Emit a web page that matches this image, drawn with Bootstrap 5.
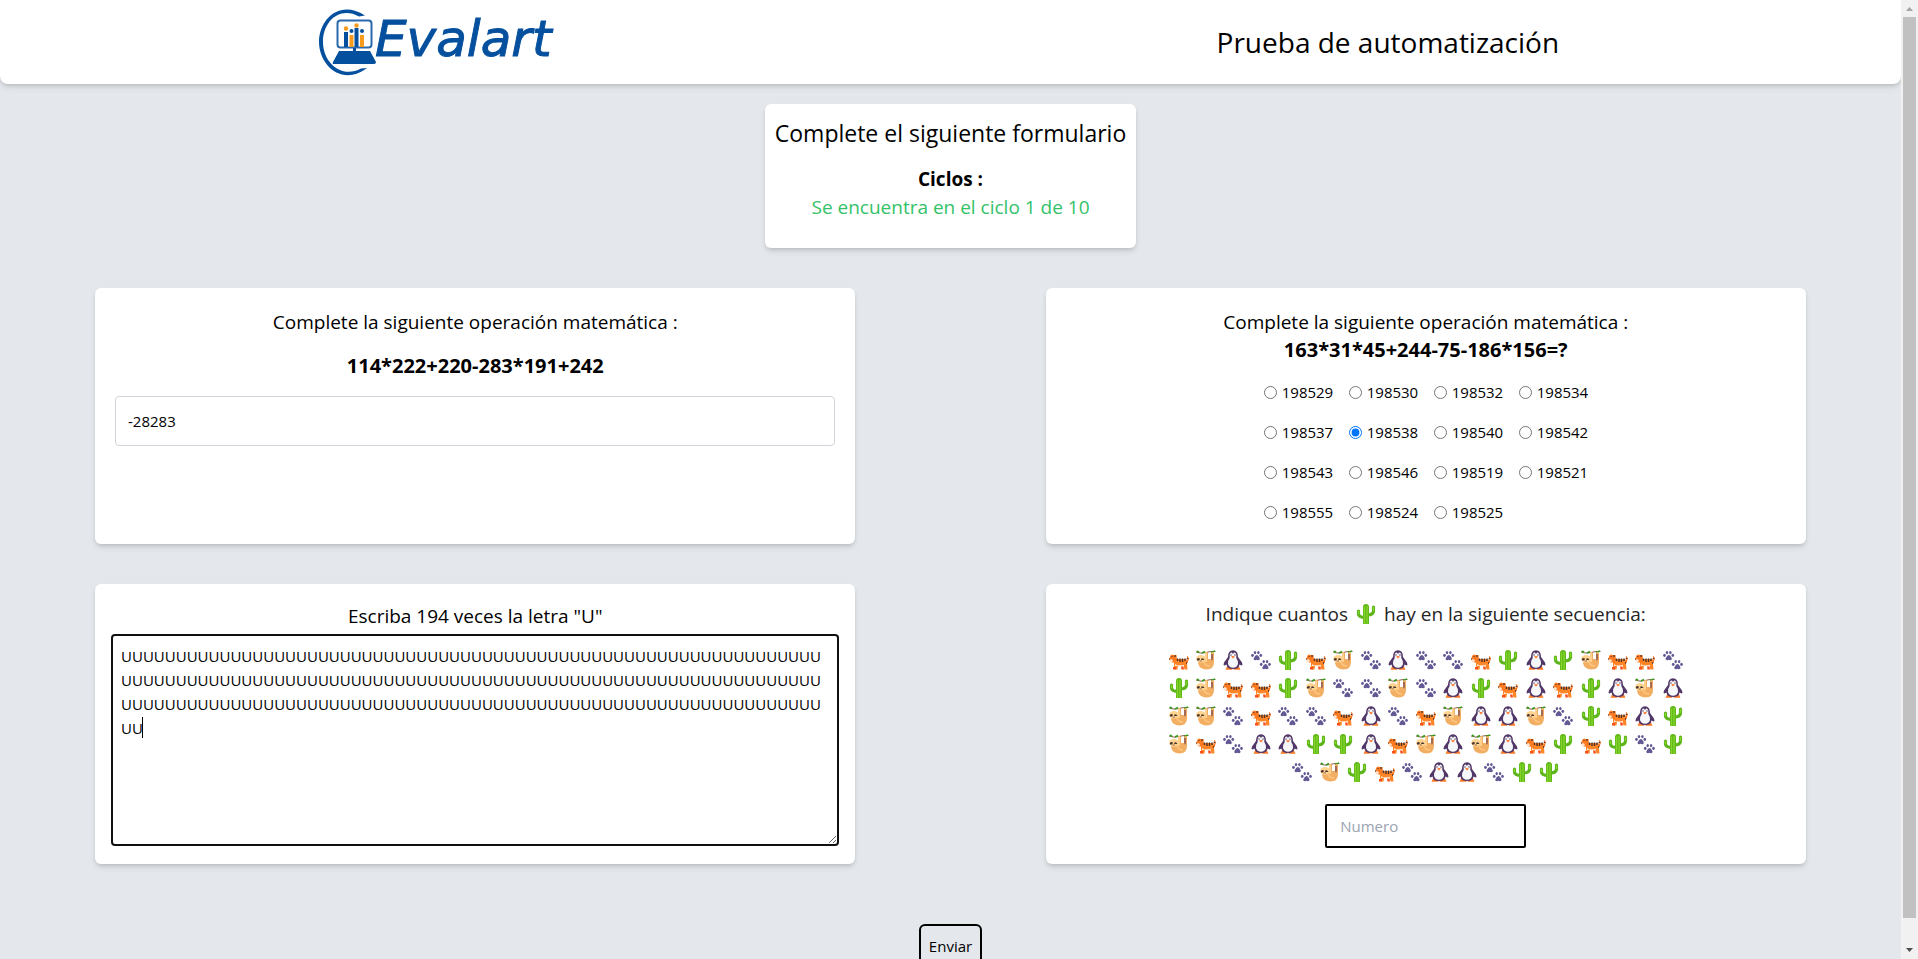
<!DOCTYPE html>
<html lang="es">
<head>
<meta charset="utf-8">
<meta name="viewport" content="width=device-width, initial-scale=1">
<title>Prueba de automatización</title>
<link href="https://cdn.jsdelivr.net/npm/bootstrap@5.3.0/dist/css/bootstrap.min.css" rel="stylesheet">
<style>
  body { font-family: "Open Sans", "Noto Sans", sans-serif; font-size: 15px; line-height: 24px; color: #000; background: #e4e7eb; }
  .page-scroll { scrollbar-width: none; min-width: 0; }
  .page-scroll::-webkit-scrollbar { display: none; }
  .soft-shadow { box-shadow: 0 4px 6px -1px rgba(0,0,0,.1), 0 2px 4px -1px rgba(0,0,0,.12); }
  .top-bar { border-radius: 0 0 8px 8px; }
  .page-title { font-size: 28px; line-height: 40px; }
  .intro { margin-top: 20px; padding: 13px 10px 27px; border-radius: 6px; }
  .form-title { font-size: 23px; line-height: 32px; }
  .lead-text { font-size: 19px; line-height: 28px; }
  .formula { font-size: 20px; line-height: 28px; }
  .panel { background: #fff; border-radius: 6px; width: 80%; }
  .panel-math { min-height: 256px; padding: 20px 20px 12px; }
  .panel-long { min-height: 280px; padding: 18px 16px 16px; }
  .panel-count { padding-top: 16px; gap: 18px; }
  .text-cycle { color: #34c269; }
  .answer { border: 1px solid #d1d5db; border-radius: 4px; height: 50px; padding: 0 12px; font-size: 15px; color: #000; }
  .answer:focus, .letters:focus { box-shadow: none; }
  .letters, .letters:focus { border: 2px solid #101010; border-radius: 4px; height: 212px; padding: 8px; font-size: 15px; line-height: 24px; color: #000; word-break: break-all; resize: vertical; outline: 0; }
  .caret { width: 1px; height: 21px; left: 31px; top: 83px; background: #000; }
  .options { display: grid; grid-template-columns: repeat(4, 85px); }
  .options label { height: 40px; padding: 0 8px; gap: 5px; }
  .options input { width: 13px; height: 13px; margin: 0; flex: none; }
  .question-soft { color: #262626; }
  .animal { width: 20px; height: 20px; display: block; }
  .sequence { width: 100%; max-width: 522px; }
  .sequence span { flex: 0 0 calc(100% / 19); height: 28px; }
  .count { width: 201px; height: 44px; border: 2px solid #000; border-radius: 2px; padding: 0 13px; }
  .count::placeholder { color: #9ca3af; }
  .send-row { margin-top: 60px; }
  .send { border: 2px solid #000; border-radius: 6px; padding: 8px; background: transparent; color: #000; }
  .rail { width: 17px; background: #f1f1f1; }
  .rail-thumb { width: 13px; background: #c1c1c1; height: 94%; }
</style>
</head>
<body>
<svg class="d-none" aria-hidden="true">
  <symbol id="T" viewBox="0 0 20 20">
    <path d="M18 6.500Q20 8 18.600 10.500L18 13" fill="none" stroke="#f37022" stroke-width="1.300"/>
    <path d="M5 9H17.500Q18.500 11 18 14L18.500 19.500H15.500L14.500 15.500H9L8.500 19.500H5.500L5 15Z" fill="#ff8526"/>
    <path d="M1.500 5.500Q3 4 4.500 5H7.500L8 10 6 12.500H2.500L0 9.500Z" fill="#ff7a20"/>
    <path d="M0 9.500L3 9.300 4 11 2.500 12.500ZM6 14Q9 17 15 14.700V16H6Z" fill="#ffe8d5"/>
    <path d="M4 17H7V19.500H4ZM12 16.500H14.500L15 19.500H12.500Z" fill="#f8501c"/>
    <path d="M8.500 8.500V11M11 8.500V12M13.500 8.500V12M16 8.500V11M18.500 8V9M17 13H18" stroke="#45302b" stroke-width="1.400"/>
    <path d="M2.500 6.500H3.500M6 5V7M0 9H1" stroke="#45302b" stroke-width="1.200"/>
  </symbol>
  <symbol id="S" viewBox="0 0 20 20">
    <path d="M0 2Q5 4 10 2.500T19.500 1.500" fill="none" stroke="#8b5d49" stroke-width="1"/>
    <path d="M1 1L3 2.500M6 3L9 1.500M15 2.500L19 1" stroke="#399b20" stroke-width="1.800"/>
    <path d="M9 3Q10.500 1 12 3V9H15V3Q16.500 1 18 3V12Q18 19.500 10.500 19.500 3 19 2 13L5 8H9Z" fill="#f2ae62"/>
    <path d="M9 3Q10 1.500 11 3V12H9Z" fill="#ffd08d"/>
    <path d="M15 4H17V9Q16 12 15 9Z" fill="#a56a55"/>
    <ellipse cx="5" cy="8.800" rx="4.800" ry="3.900" fill="#ffd48f"/>
    <path d="M.8 9Q3 7 4 9L3 10.500H1ZM5 9Q7 7 8.500 10L5.500 10Z" fill="#4a3533"/>
    <path d="M3.500 11H6" stroke="#835249" stroke-width=".8"/>
    <path d="M8 12Q9 16 14 16" fill="none" stroke="#ffc57e" stroke-width="1.500"/>
  </symbol>
  <symbol id="P" viewBox="0 0 20 20">
    <path d="M4 16.500L2.500 19.700H9L10 18 11 19.700H17.500L16 16.500Z" fill="#ff7b28"/>
    <path d="M10 .3Q15 .5 15 7L19 12.500Q20 15 18.500 15.500L16.500 14.500Q16 19 10 19T3.500 14.500L1.500 15.500Q0 15 1 12.500L5 7Q5 .5 10 .3Z" fill="#513767"/>
    <path d="M10 4Q12 1 13.300 4.500V8Q15.500 11 15 14 14 17.700 10 17.700T5 14Q4.500 11 6.700 8V4.500Q8 1 10 4Z" fill="#f6f7fa"/>
    <circle cx="8" cy="5" r=".65" fill="#38283e"/><circle cx="12" cy="5" r=".65" fill="#38283e"/>
    <path d="M8 6.500Q10 5.300 12 6.500L10 8.500Z" fill="#ff772c"/>
  </symbol>
  <symbol id="W" viewBox="0 0 20 20">
    <g id="paw" fill="#635794">
      <ellipse cx="1.500" cy="5.300" rx="1.300" ry="1.600"/><ellipse cx="4" cy="2.600" rx="1.200" ry="1.600"/>
      <ellipse cx="7.400" cy="2.600" rx="1.200" ry="1.600"/><ellipse cx="9.800" cy="5.300" rx="1.300" ry="1.600"/>
      <path d="M5.700 5Q7.500 5 8.800 8.500 9 10.500 7 10.300L5.700 9.800 4.400 10.300Q2.300 10.500 2.600 8.500 4 5 5.700 5Z"/>
    </g>
    <use href="#paw" x="8.700" y="9"/>
  </symbol>
  <symbol id="C" viewBox="0 0 20 20">
    <path d="M2.500 7V10Q2.500 13.500 10 13.500M17.500 3V7Q17.500 11 11 11" fill="none" stroke="#5eb51b" stroke-width="3.200" stroke-linecap="round"/>
    <path d="M7 20V3Q7 0 10 0T13 3V20Z" fill="#61b918"/>
    <path d="M8.500 20V2.500M11 20V2M2.500 7V10M17.500 3V7" fill="none" stroke="#86d52d" stroke-width="1.300"/>
  </symbol>
</svg>

<div class="d-flex vh-100 overflow-hidden">
  <div class="page-scroll flex-fill overflow-auto">
    <header class="top-bar soft-shadow bg-white d-flex flex-wrap justify-content-around align-items-center py-2">
      <svg width="239" height="68" viewBox="0 0 239 68" role="img" aria-label="Evalart">
        <path d="M47 7.500C22 -9 1 11 1 34S24 79 49 60L43 60.500C24 71 5 55 5 34S22 -2 41 8.500Z" fill="#05509e"/>
        <rect x="19.500" y="12.500" width="34" height="27" rx="3" fill="#fff" stroke="#2b69ad" stroke-width="2"/>
        <path d="M28 24V39M38.500 20V39" stroke="#05509e" stroke-width="4"/>
        <path d="M33.500 27V39M44 27V39" stroke="#f99b1c" stroke-width="4"/>
        <circle cx="28" cy="20.500" r="2.200" fill="#f99b1c"/><circle cx="38.500" cy="17.500" r="2.200" fill="#f99b1c"/>
        <circle cx="33.500" cy="23" r="2" fill="#05509e"/><circle cx="44" cy="23" r="2" fill="#05509e"/>
        <path d="M35 40H38V43H52L58 54Q58 56 56 56H16Q14 56 15 54L21 43H35Z" fill="#05509e"/>
        <text x="57" y="48" font-family="DejaVu Sans" font-size="50" font-style="italic" fill="#05509e" stroke="#05509e" stroke-width="1">Evalart</text>
      </svg>
      <h1 class="page-title fw-normal mb-0 px-4">Prueba de automatización</h1>
    </header>

    <form class="text-center">
      <div class="d-flex justify-content-center">
        <section class="intro bg-white soft-shadow">
          <h2 class="form-title fw-normal mb-3">Complete el siguiente formulario</h2>
          <p class="lead-text fw-bold mb-0">Ciclos :</p>
          <p class="lead-text text-cycle mb-0">Se encuentra en el ciclo 1 de 10</p>
        </section>
      </div>

      <div class="row g-0 mt-3 pt-4">
        <div class="col-6 d-flex justify-content-center mb-3 pb-4">
          <section class="panel panel-math soft-shadow">
            <label for="resultado" class="lead-text d-block mb-3">Complete la siguiente operación matemática :</label>
            <p class="formula fw-bold mb-3">114*222+220-283*191+242</p>
            <input id="resultado" class="form-control answer" type="text" value="-28283">
          </section>
        </div>
        <div class="col-6 d-flex justify-content-center mb-3 pb-4">
          <section class="panel panel-math soft-shadow">
            <p class="lead-text mb-0">Complete la siguiente operación matemática :</p>
            <p class="formula fw-bold mb-2">163*31*45+244-75-186*156=?</p>
            <div class="options justify-content-center">
              <label class="d-flex align-items-center"><input type="radio" name="op">198529</label>
              <label class="d-flex align-items-center"><input type="radio" name="op">198530</label>
              <label class="d-flex align-items-center"><input type="radio" name="op">198532</label>
              <label class="d-flex align-items-center"><input type="radio" name="op">198534</label>
              <label class="d-flex align-items-center"><input type="radio" name="op">198537</label>
              <label class="d-flex align-items-center"><input type="radio" name="op" checked>198538</label>
              <label class="d-flex align-items-center"><input type="radio" name="op">198540</label>
              <label class="d-flex align-items-center"><input type="radio" name="op">198542</label>
              <label class="d-flex align-items-center"><input type="radio" name="op">198543</label>
              <label class="d-flex align-items-center"><input type="radio" name="op">198546</label>
              <label class="d-flex align-items-center"><input type="radio" name="op">198519</label>
              <label class="d-flex align-items-center"><input type="radio" name="op">198521</label>
              <label class="d-flex align-items-center"><input type="radio" name="op">198555</label>
              <label class="d-flex align-items-center"><input type="radio" name="op">198524</label>
              <label class="d-flex align-items-center"><input type="radio" name="op">198525</label>
            </div>
          </section>
        </div>
        <div class="col-6 d-flex justify-content-center">
          <section class="panel panel-long soft-shadow">
            <label for="letras" class="lead-text d-block mb-1">Escriba 194 veces la letra "U"</label>
            <div class="position-relative">
              <textarea id="letras" class="form-control letters"></textarea>
              <span class="caret position-absolute"></span>
            </div>
          </section>
        </div>
        <div class="col-6 d-flex justify-content-center">
          <section class="panel panel-long panel-count soft-shadow d-flex flex-column align-items-center">
            <label for="numero" class="lead-text question-soft d-flex align-items-center justify-content-center">Indique cuantos
              <svg class="animal mx-2" role="img" aria-label="cactus"><use href="#C"/></svg>hay en la siguiente secuencia:</label>
            <div class="sequence d-flex flex-wrap justify-content-center" id="secuencia"></div>
            <input id="numero" class="count" type="text" placeholder="Numero">
          </section>
        </div>
      </div>

      <div class="send-row d-flex justify-content-center pb-3">
        <button type="button" class="send">Enviar</button>
      </div>
    </form>
  </div>

  <div class="rail d-flex flex-column align-items-center justify-content-between" aria-hidden="true">
    <svg width="17" height="17"><path d="M5 11H12L8.500 7Z" fill="#a3a3a3"/></svg>
    <div class="rail-thumb"></div>
    <div class="flex-fill"></div>
    <svg width="17" height="17"><path d="M5 6H12L8.500 10Z" fill="#505050"/></svg>
  </div>
</div>

<script src="https://cdn.jsdelivr.net/npm/bootstrap@5.3.0/dist/js/bootstrap.bundle.min.js"></script>
<script>
  document.getElementById("letras").value = "U".repeat(194);
  // T tigre, S perezoso, P pingüino, W huellas, C cactus
  const sequence = "TSPWCTSWPWWTCPCSTTW" + "CSTTCSWWSWPCTPTCPSP" + "SSWTWWTPWTSPPSWCTPC" + "STWPPCCPTSPSPTCTCWC" + "WSCTWPPWCC";
  document.getElementById("secuencia").innerHTML = [...sequence].map(k =>
    `<span class="d-flex align-items-center justify-content-center"><svg class="animal"><use href="#${k}"/></svg></span>`).join("");
</script>
</body>
</html>
